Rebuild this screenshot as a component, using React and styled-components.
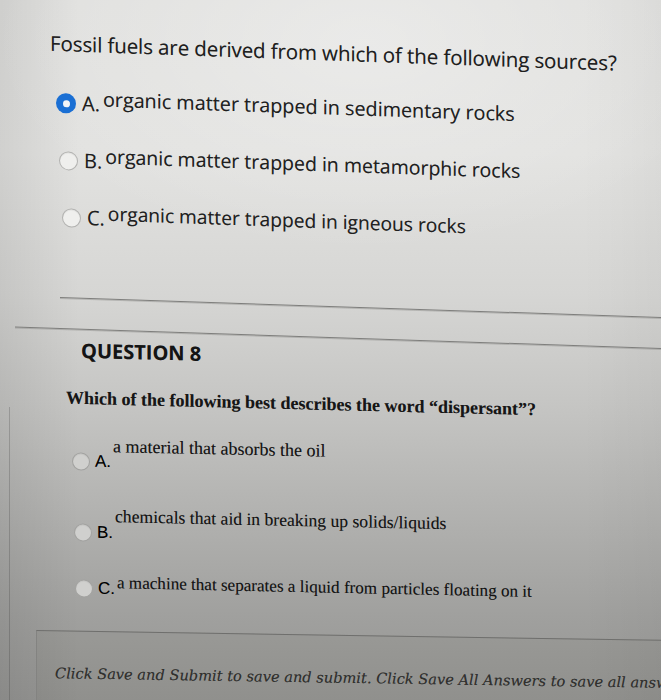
import React from "react";
import styled, { createGlobalStyle, css } from "styled-components";

const GlobalStyle = createGlobalStyle`
  html, body { margin: 0; padding: 0; }
  body { background: #979795; overflow: hidden; }
  #root { width: 661px; height: 700px; }
`;

const Screen = styled.main`
  width: 661px;
  height: 700px;
  overflow: hidden;
  display: flex;
  flex-direction: column;
  text-shadow: 0 0 0.6px rgba(0, 0, 0, 0.35);
  background:
    radial-gradient(ellipse 75% 40% at 55% 6%, rgba(255,255,255,0.32), rgba(255,255,255,0) 75%),
    linear-gradient(90deg, rgba(0,0,0,0.08) 0%, rgba(0,0,0,0) 12%, rgba(0,0,0,0) 88%, rgba(0,0,0,0.03) 100%),
    linear-gradient(180deg, #e0e0de 0%, #e2e2e0 22%, #d6d6d4 42%, #c5c5c3 58%, #b1b1af 74%, #a0a09e 88%, #959593 100%);
`;

/* the photo is taken at a slight angle: each block leans a little */
const Tilted = styled.section`
  transform: skewY(${(p) => p.$tilt}deg);
  transform-origin: 0 0;
`;

const QuestionOne = styled(Tilted)`
  padding-top: 28px;
  font-family: "Open Sans", "Noto Sans", sans-serif;
  color: #1e1e1e;
`;

const Prompt = styled.h2`
  margin: 0 0 0 50px;
  font-size: 20.5px;
  font-weight: 400;
  line-height: 27px;
  letter-spacing: -0.1px;
`;

const Choices = styled.div`
  display: flex;
  flex-direction: column;
  margin-top: ${(p) => p.$top}px;
  gap: ${(p) => p.$gap}px;
`;

const Choice = styled.div`
  display: flex;
  align-items: flex-end;
  padding-left: ${(p) => p.$indent}px;
  margin-top: ${(p) => p.$space || 0}px;
  white-space: nowrap;
`;

const Marker = styled.span`
  display: inline-flex;
  align-items: center;
  gap: ${(p) => p.$gap}px;
  height: ${(p) => p.$line}px;
  font-family: ${(p) => p.$font};
  font-size: ${(p) => p.$size}px;
  line-height: ${(p) => p.$line}px;
`;

const Radio = styled.span`
  position: relative;
  flex: none;
  box-sizing: border-box;
  width: ${(p) => p.$d}px;
  height: ${(p) => p.$d}px;
  border-radius: 50%;
  ${(p) =>
    p.$checked
      ? css`
          background: #1a6fd4;
          &::after {
            content: "";
            position: absolute;
            left: 50%;
            top: 50%;
            width: 7px;
            height: 7px;
            margin: -3.5px 0 0 -3.5px;
            border-radius: 50%;
            background: #f2f4f7;
          }
        `
      : css`
          border: 1.5px solid ${p.$ring};
          background: ${p.$fill};
          box-shadow: inset 0 1px 1px rgba(0, 0, 0, 0.06);
        `}
`;

const AnswerText = styled.span`
  margin-left: ${(p) => p.$gap}px;
  margin-bottom: ${(p) => p.$raise}px;
  font-family: ${(p) => p.$font};
  font-size: ${(p) => p.$size}px;
  line-height: ${(p) => p.$line}px;
  color: ${(p) => p.$color};
`;

const Rules = styled(Tilted)`
  margin-top: 66.5px;
  display: flex;
  flex-direction: column;
  gap: 30px;
`;

const Rule = styled.div`
  margin-left: ${(p) => p.$inset}px;
  height: 1px;
  background: #7e7e7c;
  box-shadow: 0 1px 0 rgba(120, 120, 118, 0.35);
`;

const QuestionEight = styled(Tilted)`
  color: #161616;
`;

const Heading = styled.h3`
  margin: 8px 0 0 81px;
  font-family: "Open Sans", "Noto Sans", sans-serif;
  font-weight: 700;
  font-size: 20px;
  line-height: 27px;
  color: #141414;
`;

const Ask = styled.p`
  margin: 24px 0 0 66px;
  font-family: "Liberation Serif", "Times New Roman", serif;
  font-weight: 700;
  font-size: 18px;
  line-height: 21px;
`;

const Frame = styled.div`
  flex: 1;
  margin-left: 9px;
  border-left: 1px solid rgba(40, 40, 40, 0.22);
  display: flex;
  flex-direction: column;
`;

const AnswerGroup = styled(Tilted)`
  margin-top: 27px;
  display: flex;
  flex-direction: column;
`;

const Footer = styled(Tilted)`
  flex: 1;
  margin: 33px 0 0 26px;
  border-top: 1px solid #6f6f6d;
  border-left: 1px solid #838381;
  background: rgba(50, 50, 48, 0.05);
  padding: 32px 0 0 18px;
  white-space: nowrap;
  overflow: hidden;
`;

const Notice = styled.p`
  margin: 0;
  font-family: "DejaVu Serif", "Liberation Serif", serif;
  font-style: italic;
  font-size: 14.6px;
  line-height: 20px;
  color: #30302e;
`;

const OPEN = '"Open Sans", "Noto Sans", sans-serif';
const SANS = '"Liberation Sans", Arial, sans-serif';
const SERIF = '"Liberation Serif", "Times New Roman", serif';

const q1 = [
  { key: "A.", text: "organic matter trapped in sedimentary rocks", indent: 56, size: 19.8, checked: true },
  { key: "B.", text: "organic matter trapped in metamorphic rocks", indent: 59, size: 19.5 },
  { key: "C.", text: "organic matter trapped in igneous rocks", indent: 62, size: 19.2 },
];

const q8 = [
  { key: "A.", text: "a material that absorbs the oil", indent: 62, size: 18, raise: 16, space: 0 },
  { key: "B.", text: "chemicals that aid in breaking up solids/liquids", indent: 64, size: 17.6, raise: 17, space: 34 },
  { key: "C.", text: "a machine that separates a liquid from particles floating on it", indent: 65, size: 17.1, raise: 6, space: 30 },
];

export default function App() {
  return (
    <>
      <GlobalStyle />
      <Screen>
        <QuestionOne $tilt={2}>
          <Prompt>Fossil fuels are derived from which of the following sources?</Prompt>
          <Choices $top={28} $gap={26}>
            {q1.map((c) => (
              <Choice key={c.key} $indent={c.indent}>
                <Marker $gap={6} $line={26} $size={20} $font={OPEN}>
                  <Radio
                    $d={c.checked ? 20 : 19}
                    $checked={c.checked}
                    $ring="#b2b2b0"
                    $fill="#efefed"
                  />
                  {c.key}
                </Marker>
                <AnswerText $gap={3} $raise={5} $size={c.size} $line={26} $font={OPEN} $color="#1f1f1f">
                  {c.text}
                </AnswerText>
              </Choice>
            ))}
          </Choices>
        </QuestionOne>

        <Rules $tilt={1.9}>
          <Rule $inset={60} />
          <Rule $inset={15} />
        </Rules>

        <QuestionEight $tilt={1.4}>
          <Heading>QUESTION 8</Heading>
          <Ask>Which of the following best describes the word “dispersant”?</Ask>
        </QuestionEight>

        <Frame>
          <AnswerGroup $tilt={1.2}>
            {q8.map((c) => (
              <Choice key={c.key} $indent={c.indent} $space={c.space}>
                <Marker $gap={5} $line={20} $size={17} $font={SANS}>
                  <Radio $d={18} $ring="#a2a2a0" $fill="#d0d0ce" />
                  {c.key}
                </Marker>
                <AnswerText $gap={2} $raise={c.raise} $size={c.size} $line={20} $font={SERIF} $color="#141414">
                  {c.text}
                </AnswerText>
              </Choice>
            ))}
          </AnswerGroup>
          <Footer $tilt={0.9}>
            <Notice>
              Click Save and Submit to save and submit. Click Save All Answers to save all answers.
            </Notice>
          </Footer>
        </Frame>
      </Screen>
    </>
  );
}
